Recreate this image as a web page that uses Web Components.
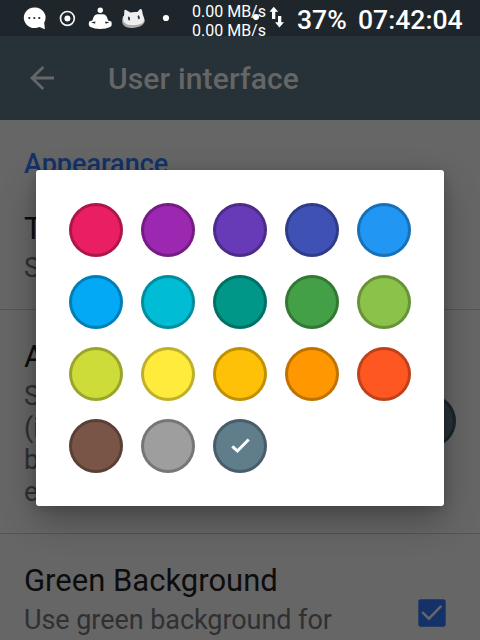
<!DOCTYPE html>
<html lang="en">
<head>
<meta charset="utf-8">
<title>User interface</title>
<style>
html,body{margin:0;width:480px;height:640px;overflow:hidden;background:#666}
body{font-family:Roboto,sans-serif}
</style>
</head>
<body>
<settings-screen></settings-screen>
<script>
const define = (name, html, setup) => customElements.define(name, class extends HTMLElement {
  connectedCallback() {
    if (this.shadowRoot) return;
    this.attachShadow({mode: 'open'}).innerHTML = html;
    if (setup) setup(this, this.shadowRoot);
  }
});

define('status-bar', `
<style>
:host{display:flex;height:36px;box-sizing:border-box;background:#1e262b;color:#fff;position:relative}
.icons{width:192px;flex:none}
.net{width:77px;flex:none;font-size:16px;line-height:19px;padding-top:2px;white-space:nowrap}
.arrows{width:28px;flex:none}
.bat{width:61px;flex:none}
.bat,.time{font-size:26.600px;font-weight:500;line-height:36px;padding-top:2px;white-space:nowrap}
.dot{position:absolute;left:253px;top:14px;width:6px;height:6px;border-radius:50%;background:#fff}
</style>
<svg class="icons" width="192" height="36" viewBox="0 0 192 36">
<path fill="#fff" d="M34.3 7.500a10.700 10.300 0 1 0 5.200 19.400l5.400 2.300-.7-6.400A10.700 10.300 0 0 0 34.3 7.500z"/>
<g fill="#1e262b"><circle cx="29.3" cy="18" r="1.1"/><circle cx="34.3" cy="18" r="1.1"/><circle cx="39.3" cy="18" r="1.1"/></g>
<circle cx="67.4" cy="18.4" r="6.900" fill="none" stroke="#f3f3f3" stroke-width="1.700"/><circle cx="67.4" cy="18.4" r="3" fill="#fff"/>
<circle cx="100.3" cy="10.3" r="2.7" fill="#fff"/>
<path fill="#fff" d="M97.500 14.300h5.600q3 .2 4 3.300l1 2.800 3.200 1.200q1.300 4.300-1.200 5.500-3.800 1.900-9.800 1.900t-9.900-1.900q-2.500-1.200-1.200-5.500l3.200-1.200 1-2.800q1-3.100 4.100-3.300z"/>
<path fill="#1e262b" d="M91 22.300l4.500-.9-.5 2.400zM109.600 22.300l-4.500-.9.500 2.400z"/>
<path fill="#aaa" d="M123 16q-2 6.500.7 9.300q3.500 3.600 10.800 2.500 8-1 10-5.500.900-2.500-.700-5z"/>
<path fill="#eee" d="M124.400 10.200q.7-.9 1.700-.2l4.300 2.500q3.200-.8 6.900-.4l2.700-2.900q1.100-.7 1.800.3l1.100 5.300q2.500 5.500-.2 7.900-3 2.300-9.100 2.600-6.200.2-9-2.500-2.500-2.600-.5-7.500z"/>
<ellipse cx="129" cy="18.500" rx="1" ry="2.100" fill="#30383c" transform="rotate(-12 129 18.500)"/><ellipse cx="138.700" cy="17.300" rx="1" ry="2.100" fill="#30383c" transform="rotate(-12 138.700 17.300)"/>
<circle cx="166" cy="18" r="3.100" fill="#fff"/>
</svg>
<div class="net">0.00 MB/s<br>0.00 MB/s</div>
<svg class="arrows" width="28" height="36" viewBox="269 0 28 36"><path fill="#fff" d="M273.700 6.800l4.500 5h-2.900v7.300h-3.300v-7.300h-2.500zM278 16h3.300v6.300h2.700l-4.600 5.200-4.300-5.200h2.900z"/></svg>
<div class="bat">37%</div><div class="time">07:42:04</div>
<i class="dot"></i>`);

define('app-bar', `
<style>
:host{display:flex;position:relative;z-index:1;align-items:center;height:84px;background:#263238;color:#666}
svg{margin-left:24px;width:36px;height:36px;flex:none}
div{margin-left:48px;padding-top:2px;font-size:30px;letter-spacing:.15px;font-weight:500;line-height:36px;white-space:nowrap}
</style>
<svg viewBox="0 0 36 36"><path d="M30 18H8.500M19.300 6.900L8 18l11.300 11.100" fill="none" stroke="#666" stroke-width="2.800"/></svg>
<div><slot></slot></div>`);

define('section-title', `
<style>:host{display:block;height:34px;padding:28px 24px 0;color:#143267;font-size:27px;font-weight:500;line-height:32px}</style><slot></slot>`);

define('preference-row', `
<style>
:host{display:flex;padding:29px 24px 25px;border-bottom:1px solid #545454;white-space:nowrap;justify-content:space-between;align-items:center}
.t{font-size:31px;line-height:36px;color:#0d0d0d}
.s{margin-top:5px;font-size:27px;letter-spacing:-.06px;line-height:32px;color:#303030;white-space:pre-line}
</style>
<div><div class="t"><slot name="title"></slot></div><div class="s"><slot name="summary"></slot></div></div><slot name="widget"></slot>`);

define('color-swatch', `
<style>
:host{display:flex;width:54px;height:54px;box-sizing:border-box;border-radius:50%;background:var(--c);box-shadow:inset 0 0 0 3px var(--ring, rgba(0,0,0,.25));align-items:center;justify-content:center}
svg{display:none}
:host([selected]) svg{display:block}
</style>
<svg width="24" height="24" viewBox="0 0 24 24"><path d="M4.300 12.300l5.100 4.700L20.700 5.500" fill="none" stroke="#fff" stroke-width="3"/></svg>`,
(host) => host.style.setProperty('--c', host.getAttribute('color')));

define('check-box', `
<style>:host{display:block;width:28px;height:28px;margin-right:10px}svg{display:block}</style>
<svg width="28" height="28" viewBox="0 0 28 28"><rect x=".3" y=".3" width="27.400" height="27.400" rx="2.500" fill="#143267"/><path d="M4.200 13.200l6.700 6.500L23.300 6.800" fill="none" stroke="#666" stroke-width="2.500"/></svg>`);

define('color-dialog', `
<style>
:host{position:absolute;z-index:2;left:36px;top:170px;width:408px;height:336px;box-sizing:border-box;padding:33px;background:#fff;border-radius:3px;box-shadow:0 14px 34px rgba(0,0,0,.3),0 2px 10px rgba(0,0,0,.15)}
.grid{display:grid;grid-template-columns:repeat(5,54px);gap:18px}
</style><div class="grid"></div>`,
(host, root) => {
  const colors = ['#e91e63','#9c27b0','#673ab7','#3f51b5','#2196f3','#03a9f4','#00bcd4','#009688','#43a047','#8bc34a','#cddc39','#ffeb3b','#ffc107','#ff9800','#ff5722','#795548','#9e9e9e','#607d8b'];
  root.querySelector('.grid').innerHTML = colors.map((c, i) => `<color-swatch color="${c}"${i === 17 ? ' selected' : ''}></color-swatch>`).join('');
});

define('settings-screen', `
<style>
:host{display:block;position:relative;width:480px;height:640px;overflow:hidden;background:#666}
.first{height:73px}
.second color-swatch{margin-bottom:6px}
.last{padding-bottom:0;border-bottom:0}
check-box{margin-top:26px}
</style>
<status-bar></status-bar>
<app-bar>User interface</app-bar>
<section-title>Appearance</section-title>
<preference-row class="first"><span slot="title">T</span><span slot="summary">S</span></preference-row>
<preference-row class="second"><span slot="title">A</span><span slot="summary">S<br>(i<br>b<br>e</span><color-swatch slot="widget" color="#263238"></color-swatch></preference-row>
<preference-row class="last"><span slot="title">Green Background</span><span slot="summary">Use green background for</span><check-box slot="widget"></check-box></preference-row>
<color-dialog></color-dialog>`);
</script>
</body>
</html>
